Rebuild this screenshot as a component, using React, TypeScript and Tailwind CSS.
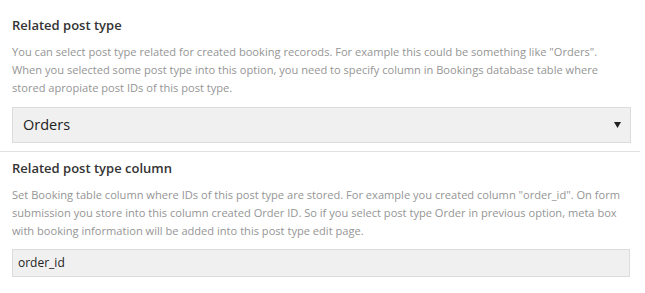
export default function App() {
    const descClass = "text-[11.1px] leading-[18px] text-[#959595]";

    return (
        <div className="w-[645px] h-[293px] bg-white font-['Open_Sans',sans-serif]">
            <div className="w-[640px]">
                {/* Related post type */}
                <div className="pl-3 pt-[15px] pb-2">
                    <h3 className="text-[13px] leading-[20px] font-semibold text-[#333]">Related post type</h3>
                    <p className={`${descClass} mt-2`}>
                        You can select post type related for created booking recorods. For example this could be something like "Orders".<br />
                        When you selected some post type into this option, you need to specify column in Bookings database table where<br />
                        stored apropiate post IDs of this post type.
                    </p>
                    <div className="mt-[10px] w-[619px] h-9 flex items-center justify-between bg-[#f0f0f0] border border-[#dcdcdc] pl-[10px] pr-[9px]">
                        <span className="text-[14.5px] text-[#222]">Orders</span>
                        <svg width="7" height="6" viewBox="0 0 7 6"><path d="M0 0h7L3.5 6z" fill="#222" /></svg>
                    </div>
                </div>
                <div className="border-t border-[#e2e2e2]" />

                {/* Related post type column */}
                <div className="pl-3 pt-[6px]">
                    <h3 className="text-[13px] leading-[20px] font-semibold text-[#333]">Related post type column</h3>
                    <p className={`${descClass} mt-2`}>
                        Set Booking table column where IDs of this post type are stored. For example you created column "order_id". On form<br />
                        submission you store into this column created Order ID. So if you select post type Order in previous option, meta box<br />
                        with booking information will be added into this post type edit page.
                    </p>
                    <div className="mt-[9px] w-[618px] h-[28px] flex items-center bg-[#f0f0f0] border border-[#dcdcdc] px-[5px]">
                        <span className="text-[12px] text-[#222]">order_id</span>
                    </div>
                </div>
            </div>
        </div>
    );
}
